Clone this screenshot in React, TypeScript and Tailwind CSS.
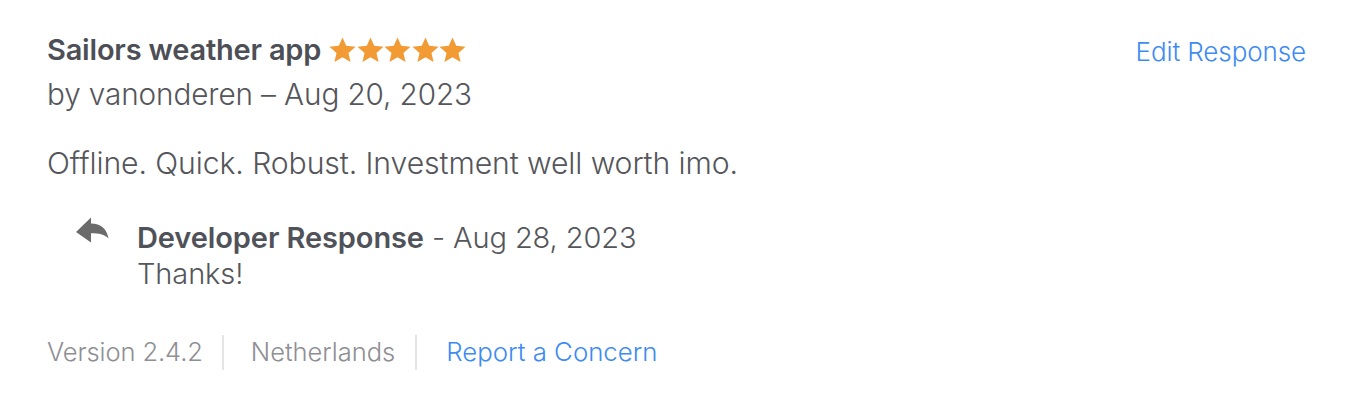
const Stars = () => (
  <span className="ml-[8px] inline-flex gap-[0.5px] text-[#f29a34]">
    {[0, 1, 2, 3, 4].map((i) => (
      <svg key={i} width="27" height="26" viewBox="0 0 24 23" className="block">
        <path
          fill="currentColor"
          d="M12 0.3l3.3 7.5 8.3.8-6.3 5.5 1.9 8.1L12 18l-7.2 4.2 1.9-8.1L.4 8.6l8.3-.8z"
        />
      </svg>
    ))}
  </span>
);

const ReplyIcon = () => (
  <svg width="34" height="26" viewBox="0 0 34 26" className="block">
    <path
      fill="#6b6b6b"
      d="M0 15L15 0.5V6.5C25 6.5 31 12 32.5 21.5 28.5 17.5 23 16.3 15 16.3V25.5Z"
    />
  </svg>
);

export default function App() {
  return (
    <div
      className="w-[1372px] h-[416px] bg-white text-[#55565b]"
      style={{ fontFamily: "Inter, 'Noto Sans', sans-serif" }}
    >
      <div className="pl-[47px] pr-[66px] pt-[32px]">
        <div className="flex justify-between">
          <div>
            <div className="flex items-center h-[36px]">
              <span className="text-[29px] font-semibold text-[#4d4f57] tracking-[-0.2px]">
                Sailors weather app
              </span>
              <Stars />
            </div>
            <div className="mt-[8px] text-[29.7px] leading-[36px] font-light tracking-[-0.1px]">
              by vanonderen – Aug 20, 2023
            </div>
          </div>
          <a className="mt-[3px] text-[26px] leading-[34px] text-[#3e8bf2] font-light tracking-[-0.1px]">
            Edit Response
          </a>
        </div>

        <p className="mt-[33px] text-[30.2px] leading-[36px] font-light tracking-[-0.1px]">
          Offline. Quick. Robust. Investment well worth imo.
        </p>

        <div className="mt-[39px] flex">
          <div className="ml-[29px] mt-[-3px] w-[61px]">
            <ReplyIcon />
          </div>
          <div className="text-[29px] leading-[36px] font-light tracking-[-0.1px]">
            <div>
              <span className="font-semibold text-[#50525a]">Developer Response</span>
              <span> - Aug 28, 2023</span>
            </div>
            <div>Thanks!</div>
          </div>
        </div>

        <div className="mt-[41px] flex items-center text-[25.5px] font-light text-[#8e8e93] tracking-[-0.1px]">
          <span>Version 2.4.2</span>
          <span className="ml-[19px] mr-[27px] h-[35px] w-[2px] bg-[#e4e4e6]" />
          <span className="tracking-[0px]">Netherlands</span>
          <span className="ml-[20px] mr-[29px] h-[35px] w-[2px] bg-[#e4e4e6]" />
          <a className="text-[#3e8bf2] text-[25.8px] tracking-[0px]">Report a Concern</a>
        </div>
      </div>
    </div>
  );
}
